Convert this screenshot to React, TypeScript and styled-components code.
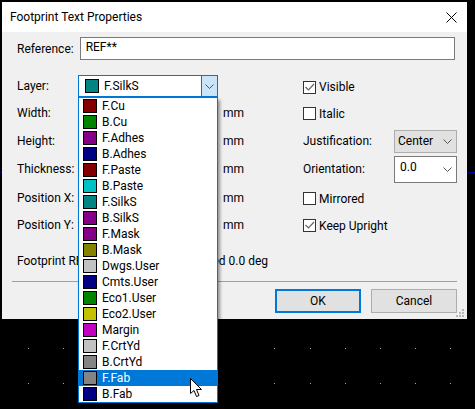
import styled, { createGlobalStyle } from 'styled-components';

const layers = [
    { name: 'F.Cu', color: '#840000' },
    { name: 'B.Cu', color: '#008400' },
    { name: 'F.Adhes', color: '#840084' },
    { name: 'B.Adhes', color: '#000084' },
    { name: 'F.Paste', color: '#840000' },
    { name: 'B.Paste', color: '#00c2c2' },
    { name: 'F.SilkS', color: '#008484' },
    { name: 'B.SilkS', color: '#840084' },
    { name: 'F.Mask', color: '#840084' },
    { name: 'B.Mask', color: '#848400' },
    { name: 'Dwgs.User', color: '#c2c2c2' },
    { name: 'Cmts.User', color: '#000084' },
    { name: 'Eco1.User', color: '#008400' },
    { name: 'Eco2.User', color: '#c2c200' },
    { name: 'Margin', color: '#c200c2' },
    { name: 'F.CrtYd', color: '#c2c2c2' },
    { name: 'B.CrtYd', color: '#848484' },
    { name: 'F.Fab', color: '#848484' },
    { name: 'B.Fab', color: '#000084' },
];

const gridX = [28, 63, 274, 310, 345, 380, 415, 450];
const gridY = [348, 383];

const GlobalStyle = createGlobalStyle`
    html, body {
        margin: 0;
        padding: 0;
        background: #000;
    }
    body {
        font-family: Roboto, 'Noto Sans', sans-serif;
        font-size: 12px;
        color: #000;
    }
`;

const Canvas = styled.div`
    position: relative;
    width: 475px;
    height: 409px;
    overflow: hidden;
    box-sizing: border-box;
    padding: 2px 8px 0 2px;
    background: #000;
`;

const CanvasDrawing = styled.svg`
    position: absolute;
    left: 0;
    top: 0;
`;

const Dialog = styled.div`
    position: relative;
    width: 465px;
    height: 317px;
    background: #f0f0f0;
    display: flex;
    flex-direction: column;
`;

const TitleBar = styled.div`
    height: 30px;
    flex: none;
    box-sizing: border-box;
    background: #fff;
    display: flex;
    align-items: center;
    justify-content: space-between;
    padding: 0 10px 0 8px;
`;

const Body = styled.div`
    flex: 1;
    display: flex;
    flex-direction: column;
    padding: 5px 10px 6px 10px;
`;

const ReferenceRow = styled.div`
    display: flex;
    align-items: center;
    gap: 6px;
    padding-left: 5px;
`;

const TextInput = styled.div`
    width: 375px;
    height: 23px;
    box-sizing: border-box;
    border: 1px solid #7a7a7a;
    background: #fff;
    padding: 0 5px;
    line-height: 19px;
`;

const Columns = styled.div`
    display: flex;
    margin-top: 15px;
    padding-left: 5px;
    height: 163px;
`;

const LeftColumn = styled.div`
    width: 286px;
    flex: none;
`;

const RightColumn = styled.div`
    flex: 1;
    display: flex;
    flex-direction: column;
`;

const FieldRow = styled.div<{ $h: number }>`
    height: ${(p) => p.$h}px;
    display: grid;
    grid-template-columns: 206px auto;
    align-items: center;
`;

const SideRow = styled.div<{ $h: number }>`
    height: ${(p) => p.$h}px;
    display: flex;
    align-items: center;
    gap: 3px;
`;

const Box = styled.span`
    width: 13px;
    height: 13px;
    box-sizing: border-box;
    border: 1px solid #333;
    background: #fff;
    display: flex;
`;

const Select = styled.div<{ $light?: boolean }>`
    margin-left: auto;
    width: 63px;
    height: ${(p) => (p.$light ? 27 : 23)}px;
    box-sizing: border-box;
    border: 1px solid ${(p) => (p.$light ? '#7a7a7a' : '#adadad')};
    background: ${(p) => (p.$light ? '#fff' : '#e1e1e1')};
    display: flex;
    align-items: center;
    justify-content: space-between;
    padding: 0 4px 0 ${(p) => (p.$light ? 5 : 3)}px;
`;

const SelectValue = styled.span<{ $raised?: boolean }>`
    margin-top: ${(p) => (p.$raised ? -5 : 0)}px;
`;

/* the open layer list covers the middle of this line */
const InfoRow = styled.div`
    height: 40px;
    padding: 3px 0 0 5px;
    display: grid;
    grid-template-columns: 61px 190px;
    align-items: center;
`;

const InfoStart = styled.span`
    white-space: nowrap;
`;

const InfoEnd = styled.span`
    text-align: right;
`;

const Footer = styled.div`
    border-top: 1px solid #a0a0a0;
    padding-top: 7px;
    display: flex;
    justify-content: flex-end;
    gap: 10px;
`;

const Button = styled.div<{ $primary?: boolean }>`
    width: 86px;
    height: 24px;
    box-sizing: border-box;
    background: #e1e1e1;
    border: ${(p) => (p.$primary ? '2px solid #0078d7' : '1px solid #adadad')};
    display: flex;
    align-items: center;
    justify-content: center;
`;

const Grip = styled.svg`
    position: absolute;
    right: 3px;
    bottom: 2px;
`;

const LayerCombo = styled.div`
    position: absolute;
    left: 78px;
    top: 75px;
    width: 140px;
    height: 22px;
    box-sizing: border-box;
    border: 1px solid #0078d7;
    background: #fff;
    display: flex;
    align-items: center;
    padding-left: 6px;
    gap: 5px;
`;

const ComboArrow = styled.span`
    margin-left: auto;
    width: 16px;
    height: 20px;
    box-sizing: border-box;
    border-left: 1px solid #0078d7;
    background: #cce4f7;
    display: flex;
    align-items: center;
    justify-content: center;
`;

const LayerList = styled.div`
    position: absolute;
    left: 78px;
    top: 97px;
    width: 140px;
    box-sizing: border-box;
    border: 1px solid #0078d7;
    background: #fff;
    box-shadow: 2px 3px 3px rgba(0, 0, 0, 0.4);
`;

const LayerItem = styled.div<{ $active?: boolean }>`
    height: 16px;
    display: flex;
    align-items: center;
    gap: 5px;
    padding-left: 4px;
    background: ${(p) => (p.$active ? '#0078d7' : 'transparent')};
    color: ${(p) => (p.$active ? '#fff' : '#000')};
`;

const Swatch = styled.span<{ $color: string }>`
    width: 14px;
    height: 14px;
    box-sizing: border-box;
    border: 1px solid #000;
    background: ${(p) => p.$color};
    flex: none;
`;

const Cursor = styled.svg`
    position: absolute;
    left: 190px;
    top: 378px;
`;

const Chevron = () => (
    <svg width="9" height="5" viewBox="0 0 9 5">
        <path d="M0.5 0.5 L4.5 4.5 L8.5 0.5" fill="none" stroke="#555" />
    </svg>
);

const Check = () => (
    <svg width="11" height="11" viewBox="0 0 11 11">
        <path d="M1.5 5 L4.5 8 L10 2" fill="none" stroke="#666" strokeWidth="1.2" />
    </svg>
);

const App = () => {
    return (
        <Canvas>
            <GlobalStyle />
            <CanvasDrawing width="475" height="409" viewBox="0 0 475 409">
                <rect x="0" y="172" width="475" height="1" fill="#0000a0" />
                {gridY.map((y) =>
                    gridX.map((x) => <rect key={`${x}-${y}`} x={x} y={y} width="1" height="1" fill="#a8a8a8" />),
                )}
            </CanvasDrawing>
            <Dialog>
                <TitleBar>
                    <span>Footprint Text Properties</span>
                    <svg width="11" height="11" viewBox="0 0 11 11">
                        <path d="M0.5 0.5 L10.5 10.5 M10.5 0.5 L0.5 10.5" stroke="#000" />
                    </svg>
                </TitleBar>
                <Body>
                    <ReferenceRow>
                        <span>Reference:</span>
                        <TextInput>REF**</TextInput>
                    </ReferenceRow>
                    <Columns>
                        <LeftColumn>
                            <FieldRow $h={22}>Layer:</FieldRow>
                            <FieldRow $h={31}><span>Width:</span><span>mm</span></FieldRow>
                            <FieldRow $h={26}><span>Height:</span><span>mm</span></FieldRow>
                            <FieldRow $h={30}><span>Thickness:</span><span>mm</span></FieldRow>
                            <FieldRow $h={28}><span>Position X:</span><span>mm</span></FieldRow>
                            <FieldRow $h={26}><span>Position Y:</span><span>mm</span></FieldRow>
                        </LeftColumn>
                        <RightColumn>
                            <SideRow $h={24}><Box><Check /></Box>Visible</SideRow>
                            <SideRow $h={29}><Box />Italic</SideRow>
                            <SideRow $h={26}>Justification:<Select><SelectValue>Center</SelectValue><Chevron /></Select></SideRow>
                            <SideRow $h={30}>Orientation:<Select $light><SelectValue $raised>0.0</SelectValue><Chevron /></Select></SideRow>
                            <SideRow $h={29}><Box />Mirrored</SideRow>
                            <SideRow $h={25}><Box><Check /></Box>Keep Upright</SideRow>
                        </RightColumn>
                    </Columns>
                    <InfoRow>
                        <InfoStart>Footprint RE</InfoStart>
                        <InfoEnd>ed 0.0 deg</InfoEnd>
                    </InfoRow>
                    <Footer>
                        <Button $primary>OK</Button>
                        <Button>Cancel</Button>
                    </Footer>
                </Body>
                <Grip width="8" height="8" viewBox="0 0 8 8">
                    <path d="M6 0h2v2H6z M3 3h2v2H3z M6 3h2v2H6z M0 6h2v2H0z M3 6h2v2H3z M6 6h2v2H6z" fill="#b8b8b8" />
                </Grip>
            </Dialog>
            <LayerCombo>
                <Swatch $color="#008484" />
                <span>F.SilkS</span>
                <ComboArrow><Chevron /></ComboArrow>
            </LayerCombo>
            <LayerList>
                {layers.map((l) => (
                    <LayerItem key={l.name} $active={l.name === 'F.Fab'}>
                        <Swatch $color={l.color} />
                        {l.name}
                    </LayerItem>
                ))}
            </LayerList>
            <Cursor width="13" height="20" viewBox="0 0 13 20">
                <path d="M0.5 0.5 V15.5 L4 12.5 L6.5 18.5 L9 17.5 L6.5 11.5 H11.5 Z" fill="#fff" stroke="#000" />
            </Cursor>
        </Canvas>
    );
};

export default App;
